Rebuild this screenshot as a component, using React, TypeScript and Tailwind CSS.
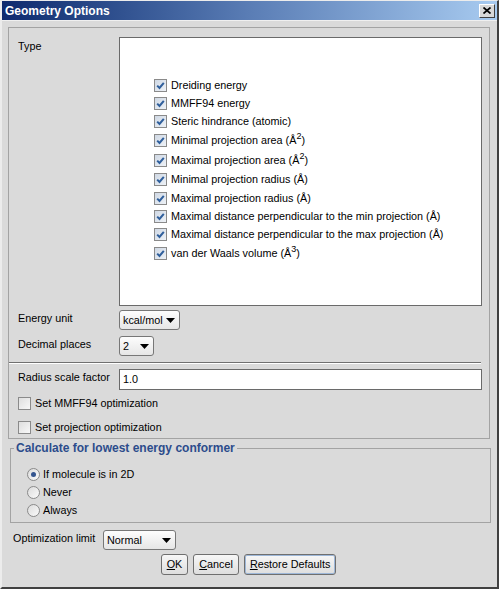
import React from "react";

const font = { fontFamily: '"Liberation Sans", Arial, sans-serif' };

const Check = ({ checked }: { checked: boolean }) => (
  <span
    className={`inline-flex items-center justify-center w-[13px] h-[13px] border border-[#8a8a8a] shrink-0 ${
      checked ? "bg-gradient-to-br from-[#cfd8e4] to-[#eef2f7]" : "bg-gradient-to-br from-[#dedede] to-[#f8f8f8]"
    }`}
  >
    {checked && (
      <svg width="9" height="9" viewBox="0 0 9 9">
        <path d="M1.2 4.6 L3.5 7 L7.8 1.8" fill="none" stroke="#2f5f9c" strokeWidth="2" />
      </svg>
    )}
  </span>
);

const Radio = ({ checked }: { checked: boolean }) => (
  <span className="inline-flex items-center justify-center w-[13px] h-[13px] rounded-full border border-[#8a8a8a] bg-gradient-to-br from-[#dcdcdc] to-[#fafafa] shrink-0">
    {checked && <span className="w-[5px] h-[5px] rounded-full bg-[#34558f]" />}
  </span>
);

const Combo = ({ value, w }: { value: string; w: string }) => (
  <div
    className={`${w} h-[20px] flex items-center justify-between border border-[#777] rounded-[3px] bg-gradient-to-b from-[#fdfdfd] to-[#e6e6e6] pl-[3px] pr-[4px] shrink-0`}
  >
    <span className="whitespace-nowrap">{value}</span>
    <svg width="9" height="5" viewBox="0 0 9 5" className="shrink-0">
      <path d="M0 0 H9 L4.5 5 Z" fill="#000" />
    </svg>
  </div>
);

const Btn = ({ u, rest, def }: { u: string; rest: string; def?: boolean }) => (
  <div
    className={`h-[21px] flex items-center px-[5px] border border-[#6f6f6f] rounded-[3px] bg-gradient-to-b from-[#f7f7f7] to-[#dedede] ${
      def ? "shadow-[inset_0_0_0_1px_#9db7d8]" : ""
    }`}
  >
    <span className="underline underline-offset-[1px]">{u}</span>
    <span className="whitespace-pre">{rest}</span>
  </div>
);

const Sup = ({ n }: { n: string }) => <sup className="text-[9px] relative -top-[5px]">{n}</sup>;

type Item = { label: React.ReactNode; h: string };

const items: Item[] = [
  { label: "Dreiding energy", h: "h-[18px]" },
  { label: "MMFF94 energy", h: "h-[18px]" },
  { label: "Steric hindrance (atomic)", h: "h-[18px]" },
  {
    label: (
      <>
        Minimal projection area (Å<Sup n="2" />)
      </>
    ),
    h: "h-[20px]",
  },
  {
    label: (
      <>
        Maximal projection area (Å<Sup n="2" />)
      </>
    ),
    h: "h-[20px]",
  },
  { label: "Minimal projection radius (Å)", h: "h-[19px]" },
  { label: "Maximal projection radius (Å)", h: "h-[18px]" },
  { label: "Maximal distance perpendicular to the min projection (Å)", h: "h-[18px]" },
  { label: "Maximal distance perpendicular to the max projection (Å)", h: "h-[18px]" },
  {
    label: (
      <>
        van der Waals volume (Å<Sup n="3" />)
      </>
    ),
    h: "h-[20px]",
  },
];

export default function App() {
  return (
    <div
      style={font}
      className="w-[499px] h-[589px] bg-[#dadada] text-[10.8px] text-black border-t border-l-2 border-r-2 border-b-2 border-t-[#ececec] border-l-[#ececec] border-r-[#404040] border-b-[#404040] flex flex-col overflow-hidden"
    >
      {/* title bar */}
      <div className="h-[20px] flex items-center justify-between pl-[3px] pr-[2px] bg-gradient-to-r from-[#0e2a6e] via-[#5a7db5] to-[#a8cbf0] border-b border-[#f0f0f0]">
        <span className="text-white font-bold text-[12px]">Geometry Options</span>
        <div className="w-[16px] h-[14px] flex items-center justify-center bg-[#d8d8d8] border border-t-white border-l-white border-r-[#404040] border-b-[#404040]">
          <svg width="8" height="7" viewBox="0 0 8 7">
            <path d="M0.5 0.5 L7.5 6.5 M7.5 0.5 L0.5 6.5" stroke="#000" strokeWidth="1.7" />
          </svg>
        </div>
      </div>

      {/* options panel */}
      <div className="ml-[6px] mt-[6px] w-[482px] h-[412px] border border-[#a3a3a3] pl-[9px] pr-[7px] pt-[9px] flex flex-col">
        <div className="flex">
          <div className="w-[101px] pt-[1px]">Type</div>
          <div className="w-[363px] h-[269px] bg-white border border-[#6a6a6a] pl-[34px] pt-[38px] flex flex-col">
            {items.map((it, i) => (
              <div key={i} className={`${it.h} flex items-center gap-[4px]`}>
                <Check checked />
                <span className="whitespace-nowrap">{it.label}</span>
              </div>
            ))}
          </div>
        </div>

        <div className="flex mt-[4px]">
          <div className="w-[101px] shrink-0">Energy unit</div>
          <Combo value="kcal/mol" w="w-[61px]" />
        </div>
        <div className="flex mt-[6px]">
          <div className="w-[101px] shrink-0">Decimal places</div>
          <Combo value="2" w="w-[35px]" />
        </div>

        <div className="-ml-[9px] mt-[6px] border-t border-[#707070] border-b border-b-white w-[472px]" />

        <div className="flex mt-[5px]">
          <div className="w-[101px] shrink-0">Radius scale factor</div>
          <div className="w-[363px] h-[21px] bg-white border border-[#6a6a6a] flex items-center pl-[3px]">1.0</div>
        </div>

        <div className="flex items-center gap-[4px] mt-[6px] h-[14px]">
          <Check checked={false} />
          <span>Set MMFF94 optimization</span>
        </div>
        <div className="flex items-center gap-[4px] mt-[10px] h-[14px]">
          <Check checked={false} />
          <span>Set projection optimization</span>
        </div>
      </div>

      {/* conformer group */}
      <fieldset className="ml-[8px] mt-0 w-[481px] h-[84px] border border-[#a3a3a3]">
        <legend className="ml-[3px] px-[2px] font-bold text-[12px] text-[#2c4c8c]">
          Calculate for lowest energy conformer
        </legend>
        <div className="flex flex-col mt-[8px] pl-[16px]">
          <div className="h-[18px] flex items-center gap-[3px]">
            <Radio checked />
            <span>If molecule is in 2D</span>
          </div>
          <div className="h-[18px] flex items-center gap-[3px]">
            <Radio checked={false} />
            <span>Never</span>
          </div>
          <div className="h-[18px] flex items-center gap-[3px]">
            <Radio checked={false} />
            <span>Always</span>
          </div>
        </div>
      </fieldset>

      <div className="flex ml-[11px] mt-[7px]">
        <div className="w-[90px] shrink-0 whitespace-nowrap">Optimization limit</div>
        <Combo value="Normal" w="w-[73px]" />
      </div>

      <div className="flex justify-center gap-[5px] mt-[4px] pr-[2px]">
        <Btn u="O" rest="K" />
        <Btn u="C" rest="ancel" />
        <Btn u="R" rest="estore Defaults" def />
      </div>
    </div>
  );
}
